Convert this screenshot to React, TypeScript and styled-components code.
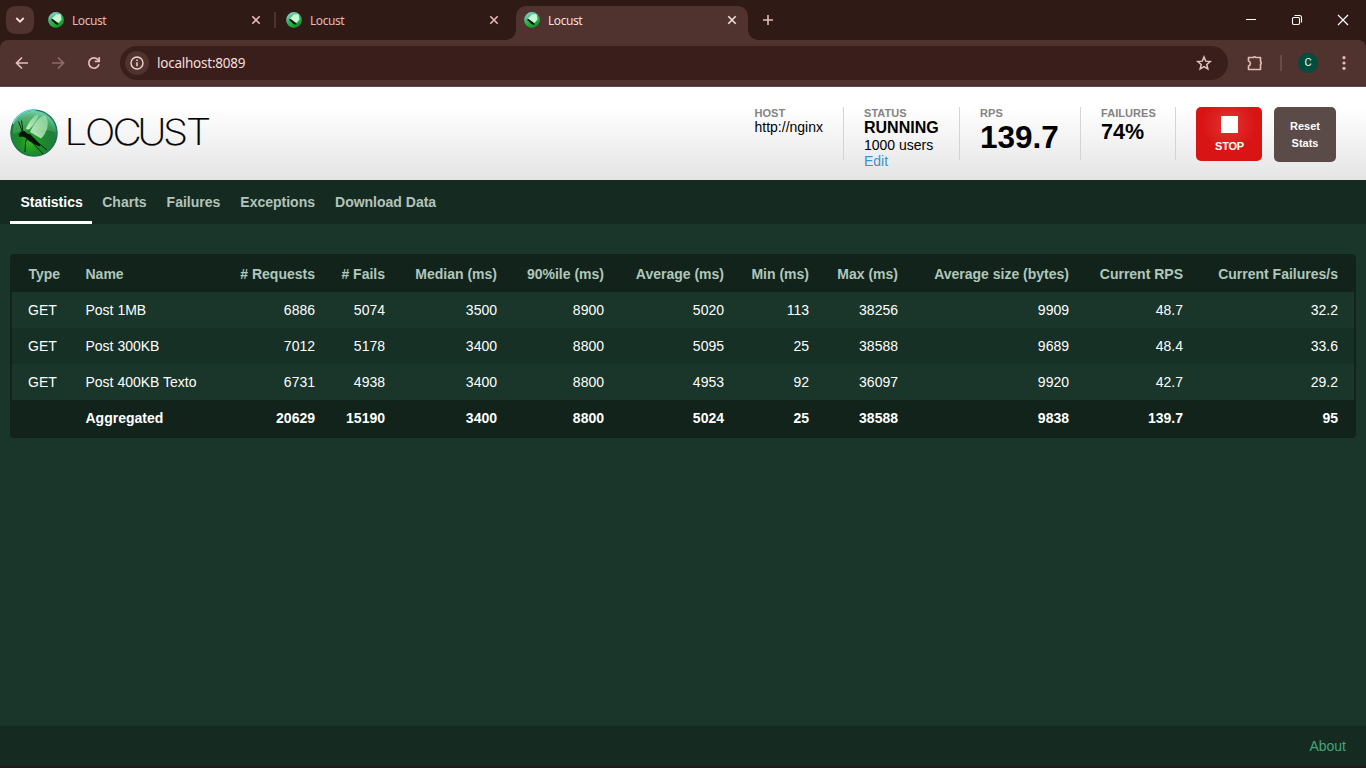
import React from "react";
import styled, { createGlobalStyle, css } from "styled-components";

const GlobalStyle = createGlobalStyle`
  * { box-sizing: border-box; }
  body {
    margin: 0;
    overflow: hidden;
    background: #1a3529;
    font-family: "Liberation Sans", Arial, sans-serif;
    font-size: 14px;
    color: #fff;
  }
`;

const Window = styled.div`
  display: flex;
  flex-direction: column;
  width: 1366px;
  height: 768px;
  border-bottom: 2px solid #2b1519;
`;

/* ---------- browser chrome ---------- */

const TabStrip = styled.div`
  display: flex;
  flex: none;
  height: 40px;
  background: #301a16;
  font-family: "Noto Sans", "Open Sans", sans-serif;
`;

const TabSearch = styled.div`
  display: grid;
  place-items: center;
  width: 28px;
  height: 28px;
  margin: 6px 6px 0;
  border-radius: 9px;
  background: #50322f;
`;

const Tab = styled.div<{ $active?: boolean; $divider?: boolean }>`
  position: relative;
  display: flex;
  align-items: center;
  width: ${(p) => (p.$active ? 232 : 238)}px;
  height: ${(p) => (p.$active ? 34 : 28)}px;
  margin-top: 6px;
  padding: ${(p) => (p.$active ? "0 11px 6px 8px" : "0 17px 0 8px")};
  color: ${(p) => (p.$active ? "#f6dedb" : "#e3bab6")};
  ${(p) =>
    p.$divider &&
    css`
      &::after {
        content: "";
        position: absolute;
        right: 2px;
        top: 6px;
        width: 2px;
        height: 16px;
        background: #50322f;
      }
    `}
  ${(p) =>
    p.$active &&
    css`
      border-radius: 10px 10px 0 0;
      background: #50322f;
      &::before,
      &::after {
        content: "";
        position: absolute;
        bottom: 0;
        width: 10px;
        height: 10px;
      }
      &::before {
        left: -10px;
        background: radial-gradient(circle at 0 0, transparent 9.5px, #50322f 10px);
      }
      &::after {
        right: -10px;
        background: radial-gradient(circle at 100% 0, transparent 9.5px, #50322f 10px);
      }
    `}
`;

const TabTitle = styled.span`
  flex: 1;
  padding-top: 1px;
  margin-left: 8px;
  font-size: 12px;
  line-height: 16px;
  letter-spacing: -0.45px;
`;

const NewTab = styled.div`
  display: grid;
  place-items: center;
  width: 28px;
  height: 28px;
  margin: 6px 0 0 6px;
`;

const WindowControls = styled.div`
  display: flex;
  margin-left: auto;
  width: 138px;
  & > svg {
    width: 46px;
    height: 40px;
  }
`;

const ToolbarBack = styled.div`
  flex: none;
  background: #301a16;
`;

const Toolbar = styled.div`
  display: flex;
  align-items: center;
  height: 47px;
  padding: 0 8px 1px 13px;
  border-bottom: 1px solid #5f4845;
  border-radius: 8px 8px 0 0;
  background: #50322f;
`;

const NavIcon = styled.svg`
  flex: none;
  width: 18px;
  height: 18px;
  margin-right: 18px;
`;

const Omnibox = styled.div`
  display: flex;
  align-items: center;
  width: 1108px;
  height: 34px;
  margin-left: -1px;
  padding: 0 15px 0 5px;
  border-radius: 17px;
  background: #391e1b;
`;

const SiteInfo = styled.div`
  display: grid;
  place-items: center;
  width: 24px;
  height: 24px;
  border-radius: 12px;
  background: #50322f;
`;

const Url = styled.span`
  flex: 1;
  margin-left: 8px;
  color: #f5dfdc;
  font-family: "Noto Sans", "Open Sans", sans-serif;
  font-size: 13.5px;
  letter-spacing: -0.24px;
`;

const ExtensionsIcon = styled.svg`
  width: 18px;
  height: 18px;
  margin-left: 18px;
`;

const ToolSeparator = styled.div`
  width: 2px;
  height: 16px;
  margin: 0 16px;
  background: #6c4a47;
`;

const Avatar = styled.div`
  display: grid;
  place-items: center;
  width: 20px;
  height: 20px;
  border-radius: 50%;
  background: #004d40;
  font: 11px/20px Roboto, sans-serif;
  color: #f3f3f3;
`;

const MenuIcon = styled.svg`
  width: 18px;
  height: 18px;
  margin-left: 17px;
`;

/* ---------- page ---------- */

const Masthead = styled.header`
  display: flex;
  flex: none;
  height: 93px;
  padding: 20px 30px 0 10px;
  background: linear-gradient(#fff, #fff 22%, #e4e4e4);
  color: #000;
`;

const Brand = styled.div`
  display: flex;
  margin-right: auto;
  padding-top: 2px;
`;

const Wordmark = styled.svg`
  width: 152px;
  height: 48px;
  margin-left: 5px;
`;

const Metric = styled.div<{ $width: number }>`
  width: ${(p) => p.$width}px;
  height: 53px;
  padding-left: 20px;
  border-right: 1px solid #d4d4d4;
  white-space: nowrap;
  &:nth-child(2) {
    padding-left: 20.5px;
  }
`;

const Label = styled.div`
  color: #848484;
  font-size: 11px;
  font-weight: bold;
  line-height: 12px;
  letter-spacing: 0.05px;
`;

const Value = styled.div<{ $size?: number; $line?: number; $bold?: boolean }>`
  font-size: ${(p) => p.$size ?? 14}px;
  line-height: ${(p) => p.$line ?? 17}px;
  font-weight: ${(p) => (p.$bold ? "bold" : "normal")};
`;

const EditLink = styled.a`
  display: block;
  color: #3d93c4;
  line-height: 15px;
`;

const ActionButton = styled.div<{ $kind: "stop" | "reset" }>`
  display: flex;
  flex-direction: column;
  align-items: center;
  border-radius: 5px;
  color: #fff;
  font-size: 11px;
  font-weight: bold;
  line-height: 17px;
  ${(p) =>
    p.$kind === "stop"
      ? css`
          width: 66px;
          height: 54px;
          margin-left: 20px;
          padding: 9px 0 0 1px;
          background: radial-gradient(circle at 50% 33%, #e13434 0, #d91414 27px);
          letter-spacing: -0.2px;
        `
      : css`
          width: 62px;
          height: 55px;
          margin-left: 12px;
          padding-top: 11px;
          background: #5a4a48;
        `}
`;

const StopSquare = styled.div`
  width: 17px;
  height: 17px;
  margin-bottom: 5px;
  background: #fff;
`;

const Tabs = styled.nav`
  display: flex;
  flex: none;
  height: 44px;
  padding-left: 10px;
  background: #152a21;
`;

const PageTab = styled.a<{ $active?: boolean }>`
  height: 44px;
  padding: 0 ${(p) => (p.$active ? "9.5px 0 10.5px" : "10px")};
  border-bottom: 3px solid ${(p) => (p.$active ? "#fff" : "transparent")};
  color: ${(p) => (p.$active ? "#fff" : "#b3c3bc")};
  font-weight: bold;
  line-height: 44px;
`;

const Content = styled.main`
  flex: 1;
  padding: 30px 10px 0;
`;

const StatsTable = styled.table`
  width: 1346px;
  table-layout: fixed;
  border: 2px solid #12231b;
  border-radius: 4px;
  border-spacing: 0;
  overflow: hidden;
`;

const Row = styled.tr<{ $tone: "head" | "odd" | "even" | "total" }>`
  height: 36px;
  background: ${(p) =>
    ({ head: "#12231b", odd: "#1a3529", even: "#173026", total: "#12231b" })[p.$tone]};
  color: ${(p) => (p.$tone === "head" ? "#b0c7bc" : "#fff")};
  font-weight: ${(p) => (p.$tone === "head" || p.$tone === "total" ? "bold" : "normal")};
`;

const Cell = styled.td<{ $left?: boolean }>`
  padding: ${(p) => (p.$left ? "0 0 0 16.5px" : "0 16px 0 0")};
  text-align: ${(p) => (p.$left ? "left" : "right")};
  white-space: nowrap;
  td&:first-child {
    padding-left: 16px;
  }
`;

const Footer = styled.footer`
  flex: none;
  height: 40px;
  padding-right: 20px;
  background: #152a21;
  color: #43a57c;
  line-height: 40px;
  text-align: right;
`;

/* ---------- drawings ---------- */

function LocustLogo({ size, id }: { size: number; id: string }) {
  return (
    <svg width={size} height={size} viewBox="0 0 48 48">
      <defs>
        <radialGradient id={id} cx="0.42" cy="0.7" r="0.72">
          <stop offset="0" stopColor="#35b81f" />
          <stop offset="0.3" stopColor="#1c8f28" />
          <stop offset="0.75" stopColor="#1f7a3e" />
          <stop offset="1" stopColor="#52c9b8" />
        </radialGradient>
        <linearGradient id={id + "s"} x1="0" y1="0" x2="0" y2="1">
          <stop offset="0" stopColor="#8fe0b0" stopOpacity="0.65" />
          <stop offset="1" stopColor="#5cc46c" stopOpacity="0.3" />
        </linearGradient>
        <linearGradient id={id + "w"} x1="1" y1="0" x2="0" y2="1">
          <stop offset="0" stopColor="#a5e6ae" stopOpacity="0.6" />
          <stop offset="1" stopColor="#e3f9e3" stopOpacity="0.85" />
        </linearGradient>
      </defs>
      <circle cx="24" cy="24" r="23.6" fill={`url(#${id})`} />
      <path d="M3 25C2 11 12 2 24 2s22 9 21 21C33 19 13 21 3 25Z" fill={`url(#${id}s)`} />
      <circle cx="24" cy="24" r="23" fill="none" stroke="#1f7055" strokeWidth="1.1" />
      <path d="M3 15A23 23 0 0 1 26 1" fill="none" stroke="#68d3d2" strokeWidth="1.6" />
      <path d="M16 20C18 14 23 7 28 5.500c1.500 3-4 10-9 15Z" fill={`url(#${id}w)`} />
      <path d="M20 23C24 15 29 7 35 6.500c5 5 3 17-4 23Z" fill={`url(#${id}w)`} />
      <path d="M8.500 25.500 11 22.500 14.500 22 17 24.500 20.500 25.500 25 30 30.500 36 29.500 37.500 24 35 18.500 31.500 16 29 12.500 27.500 9.500 28Z" fill="#07130a" />
      <path
        d="M12.500 23 8.500 12.500M13 23 11.500 11.500M17 29l-1.500 4-.5 10M22 33l11 12M27 33l10 8"
        fill="none"
        stroke="#07130a"
        strokeWidth="0.85"
      />
    </svg>
  );
}

function FaviconLogo({ id }: { id: string }) {
  return (
    <svg width="16" height="16" viewBox="0 0 16 16">
      <defs>
        <linearGradient id={id} x1="0.2" y1="0" x2="0.7" y2="1">
          <stop offset="0" stopColor="#8bd8cf" />
          <stop offset="0.45" stopColor="#3fae70" />
          <stop offset="0.8" stopColor="#1da328" />
          <stop offset="1" stopColor="#167748" />
        </linearGradient>
      </defs>
      <circle cx="8" cy="8" r="7.9" fill={`url(#${id})`} />
      <path d="M3.500 7 8.500 2l1 .500L12.500 2l1 5.500L10.500 11Z" fill="#c8f7d4" />
      <path d="M3 7.700 4.400 6.700 10.700 11.800 10 13 7.500 12Z" fill="#06150b" />
    </svg>
  );
}

const CloseIcon = ({ color }: { color: string }) => (
  <svg width="10" height="10" viewBox="0 0 10 10">
    <path d="m1.3 1.3 7.4 7.4m0-7.4L1.3 8.7" stroke={color} strokeWidth="1.6" />
  </svg>
);

/* ---------- data ---------- */

const columns: [string, number][] = [
  ["Type", 57],
  ["Name", 155],
  ["# Requests", 107],
  ["# Fails", 70],
  ["Median (ms)", 112],
  ["90%ile (ms)", 107],
  ["Average (ms)", 120],
  ["Min (ms)", 85],
  ["Max (ms)", 89],
  ["Average size (bytes)", 171],
  ["Current RPS", 114],
  ["Current Failures/s", 155],
];

const rows = [
  ["GET", "Post 1MB", "6886", "5074", "3500", "8900", "5020", "113", "38256", "9909", "48.7", "32.2"],
  ["GET", "Post 300KB", "7012", "5178", "3400", "8800", "5095", "25", "38588", "9689", "48.4", "33.6"],
  ["GET", "Post 400KB Texto", "6731", "4938", "3400", "8800", "4953", "92", "36097", "9920", "42.7", "29.2"],
  ["", "Aggregated", "20629", "15190", "3400", "8800", "5024", "25", "38588", "9838", "139.7", "95"],
];

const pageTabs = ["Statistics", "Charts", "Failures", "Exceptions", "Download Data"];

export default function App() {
  return (
    <Window>
      <GlobalStyle />
      <TabStrip>
        <TabSearch>
          <svg width="10" height="8" viewBox="0 0 10 8">
            <path d="m1.3 2 3.7 3.7L8.7 2" fill="none" stroke="#f6dedb" strokeWidth="1.8" />
          </svg>
        </TabSearch>
        {[0, 1, 2].map((i) => (
          <Tab key={i} $active={i === 2} $divider={i === 0}>
            <FaviconLogo id={"fav" + i} />
            <TabTitle>Locust</TabTitle>
            <CloseIcon color={i === 2 ? "#f6dedb" : "#e3bab6"} />
          </Tab>
        ))}
        <NewTab>
          <svg width="12" height="12" viewBox="0 0 12 12">
            <path d="M6 1v10M1 6h10" stroke="#e3bab6" strokeWidth="1.6" />
          </svg>
        </NewTab>
        <WindowControls>
          <svg viewBox="0 0 46 40">
            <path d="M18 19.5h10" stroke="#fff" />
          </svg>
          <svg viewBox="0 0 46 40" fill="none" stroke="#fff" strokeWidth="1.1">
            <rect x="18.5" y="17.5" width="7" height="7" rx="1.2" />
            <path d="M20.5 15.5h5a2 2 0 0 1 2 2v5" />
          </svg>
          <svg viewBox="0 0 46 40">
            <path d="m18 15 10 10m0-10L18 25" stroke="#fff" strokeWidth="1.2" />
          </svg>
        </WindowControls>
      </TabStrip>
      <ToolbarBack>
        <Toolbar>
          <NavIcon viewBox="0 0 18 18" fill="none" stroke="#e6bdb9" strokeWidth="1.7">
            <path d="M15 9H4M9 3.5 3.5 9 9 14.5" />
          </NavIcon>
          <NavIcon viewBox="0 0 18 18" fill="none" stroke="#8d6b68" strokeWidth="1.7">
            <path d="M3 9h11M9 3.5 14.5 9 9 14.5" />
          </NavIcon>
          <NavIcon viewBox="0 0 18 18" fill="none" stroke="#e6bdb9" strokeWidth="1.7">
            <path d="M14 10.3A5.2 5.2 0 1 1 13.2 6L14 7" />
            <path d="M14.2 3v4.4H9.8" />
          </NavIcon>
          <Omnibox>
            <SiteInfo>
              <svg width="14" height="14" viewBox="0 0 14 14">
                <circle cx="7" cy="7" r="6" fill="none" stroke="#eed5d2" strokeWidth="1.4" />
                <path d="M7 6.3v4M7 3.5v1.6" stroke="#eed5d2" strokeWidth="1.5" />
              </svg>
            </SiteInfo>
            <Url>localhost:8089</Url>
            <svg width="18" height="18" viewBox="0 0 24 24">
              <path
                d="m12 4 2.300 5.500 6 .5-4.600 4 1.400 5.800L12 16.700l-5.100 3.100 1.400-5.800-4.600-4 6-.5Z"
                fill="none"
                stroke="#e0c4c1"
                strokeWidth="2"
              />
            </svg>
          </Omnibox>
          <ExtensionsIcon viewBox="0 0 18 18">
            <path
              d="M2.500 3.500H7.300a1.400 1.400 0 0 1 2.400 0H14.500V7.800a1.500 1.500 0 0 1 0 2.600V15.500H2.500V12A2.600 2.600 0 0 0 2.500 7Z"
              fill="none"
              stroke="#e6bdb9"
              strokeWidth="1.6"
              strokeLinejoin="round"
            />
          </ExtensionsIcon>
          <ToolSeparator />
          <Avatar>C</Avatar>
          <MenuIcon viewBox="0 0 18 18" fill="#e6bdb9">
            <circle cx="9" cy="3.7" r="1.6" />
            <circle cx="9" cy="9" r="1.6" />
            <circle cx="9" cy="14.3" r="1.6" />
          </MenuIcon>
        </Toolbar>
      </ToolbarBack>

      <Masthead>
        <Brand>
          <LocustLogo size={48} id="logo" />
          <Wordmark viewBox="0 0 152 48">
            <text
              transform="scale(1.12 1)"
              x="1.3 19.6 44.1 66.3 89.2 109.8"
              y="36.5"
              fontFamily="Inter"
              fontWeight="200"
              fontSize="36"
              fill="#000"
              stroke="#000"
              strokeWidth="0.2"
            >
              LOCUST
            </text>
          </Wordmark>
        </Brand>
        <Metric $width={110}>
          <Label>HOST</Label>
          <Value>http://nginx</Value>
        </Metric>
        <Metric $width={116}>
          <Label>STATUS</Label>
          <Value $size={16} $line={18} $bold>RUNNING</Value>
          <Value>1000 users</Value>
          <EditLink>Edit</EditLink>
        </Metric>
        <Metric $width={121}>
          <Label>RPS</Label>
          <Value $size={31.5} $line={36} $bold>139.7</Value>
        </Metric>
        <Metric $width={95}>
          <Label>FAILURES</Label>
          <Value $size={21.5} $line={26} $bold>74%</Value>
        </Metric>
        <ActionButton $kind="stop">
          <StopSquare />
          STOP
        </ActionButton>
        <ActionButton $kind="reset">
          <span>Reset</span>
          <span>Stats</span>
        </ActionButton>
      </Masthead>

      <Tabs>
        {pageTabs.map((t, i) => (
          <PageTab key={t} $active={i === 0}>
            {t}
          </PageTab>
        ))}
      </Tabs>

      <Content>
        <StatsTable>
          <colgroup>
            {columns.map(([name, width]) => (
              <col key={name} width={width} />
            ))}
          </colgroup>
          <thead>
            <Row $tone="head">
              {columns.map(([name], i) => (
                <Cell as="th" key={name} $left={i < 2}>
                  {name}
                </Cell>
              ))}
            </Row>
          </thead>
          <tbody>
            {rows.map((row, r) => (
              <Row key={row[1]} $tone={r === 3 ? "total" : r % 2 ? "even" : "odd"}>
                {row.map((value, i) => (
                  <Cell key={i} $left={i < 2}>
                    {value}
                  </Cell>
                ))}
              </Row>
            ))}
          </tbody>
        </StatsTable>
      </Content>
      <Footer>About</Footer>
    </Window>
  );
}
